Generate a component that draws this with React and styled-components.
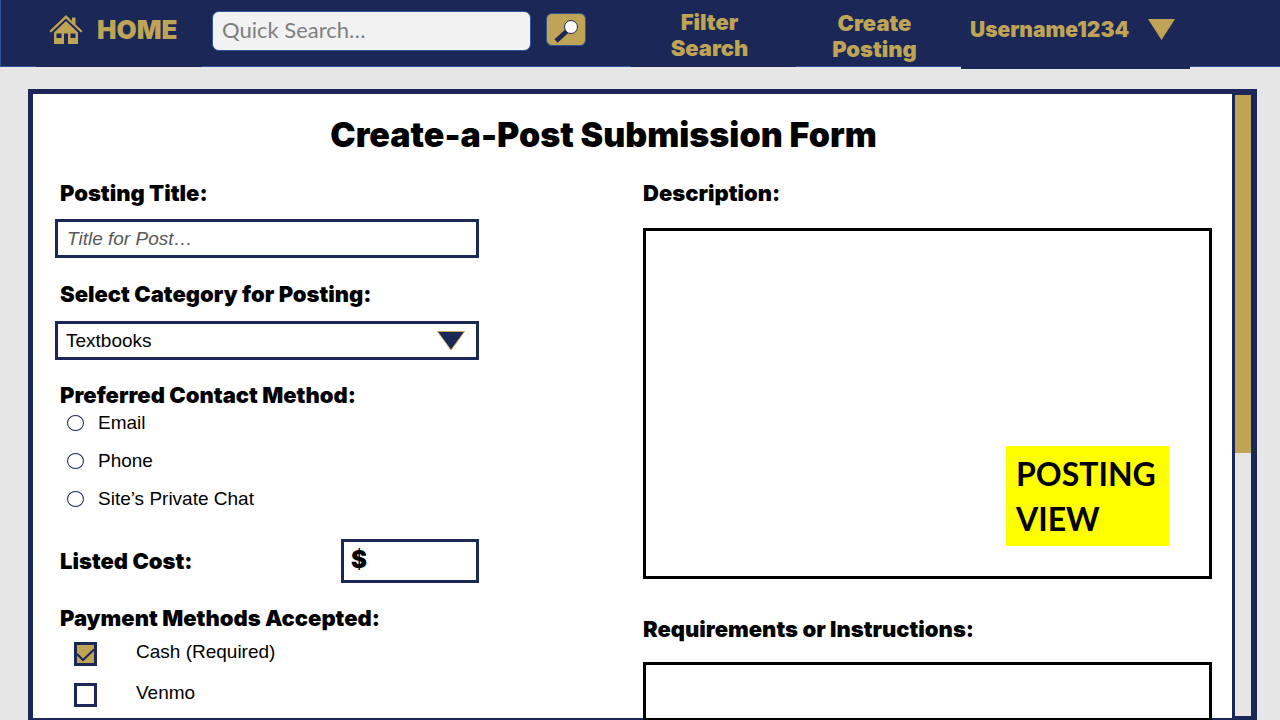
import React from "react";
import styled, { createGlobalStyle } from "styled-components";

const navy = "#1b2857";
const gold = "#bfa456";
const edge = "#2f5597";
const heavy = `"Inter", "Liberation Sans", sans-serif`;
const plain = `"Liberation Sans", Arial, sans-serif`;
const humanist = `"Lato", "Open Sans", sans-serif`;

const GlobalStyle = createGlobalStyle`
  *, *::before, *::after { box-sizing: border-box; }
  body { margin: 0; background: #e6e6e6; color: #000; font-family: ${plain}; }
  button, input, select, textarea { font: inherit; color: inherit; margin: 0; }
`;

const Page = styled.div`
  height: 100vh;
  display: flex;
  flex-direction: column;
  overflow: hidden;
`;

const Header = styled.header`
  display: flex;
  align-items: flex-start;
  height: 67px;
  flex: none;
  padding: 0 90px 0 35px;
  background: ${navy};
  border-left: 1px solid ${edge};
  border-bottom: 1px solid ${edge};
`;

const HomeLink = styled.a`
  display: flex;
  align-items: center;
  gap: 14px;
  width: 166px;
  height: 67px;
  padding: 0 0 7px 13px;
  background: ${navy};
  color: ${gold};
  font: 900 26px/28px ${heavy};
  text-decoration: none;
`;

const SearchForm = styled.form`
  display: flex;
  flex: 1;
  align-items: flex-start;
  gap: 15px;
  padding: 11px 45px 0 10px;
`;

const SearchInput = styled.input`
  flex: 1;
  min-width: 0;
  height: 40px;
  padding: 0 9px 4px;
  border: 1px solid ${edge};
  border-radius: 7px;
  background: #f2f2f2;
  font: 22px/28px ${humanist};
  &::placeholder { color: #7f7f7f; opacity: 1; }
`;

const SearchButton = styled.button`
  width: 40px;
  height: 33px;
  margin-top: 2px;
  padding: 0;
  border: 1px solid ${edge};
  border-radius: 6px;
  background: ${gold};
  svg { display: block; }
`;

const NavLink = styled.a`
  width: 165px;
  height: ${(p) => (p.$raised ? 66 : 67)}px;
  padding: ${(p) => (p.$raised ? 10 : 9)}px 42px 0 34px;
  background: ${navy};
  color: ${gold};
  font: 900 22px/26px ${heavy};
  text-align: center;
  text-decoration: none;
`;

const UserButton = styled.button`
  display: flex;
  align-items: center;
  justify-content: space-between;
  width: 229px;
  height: 69px;
  padding: 0 14px 10px 9px;
  border: 0;
  background: ${navy};
  color: ${gold};
  font: 900 21px/26px ${heavy};
`;

const Panel = styled.main`
  display: flex;
  flex: 1;
  min-height: 0;
  margin: 22px 23px 0 28px;
  border: 5px solid ${navy};
  border-bottom-width: 2px;
  background: #fff;
`;

const PostForm = styled.form`
  flex: 1;
  min-width: 0;
  padding: 21px 20px 0 22px;
`;

const Title = styled.h1`
  margin: 0 60px 26px 0;
  font: 900 34px/40px ${heavy};
  text-align: center;
`;

const Columns = styled.div`
  display: grid;
  grid-template-columns: 424fr 569fr;
  column-gap: 164px;
`;

const Column = styled.div`
  display: flex;
  flex-direction: column;
  min-width: 0;
`;

const Field = styled.div`
  display: flex;
  flex-direction: column;
  gap: ${(p) => p.$gap || 14}px;
  margin-bottom: ${(p) => p.$after || 24}px;
`;

const Label = styled.label`
  padding-left: ${(p) => (p.$flush ? 0 : 5)}px;
  font: 900 22px/24px ${heavy};
`;

const Group = styled.fieldset`
  min-width: 0;
  margin: 0 0 ${(p) => p.$after || 0}px;
  padding: 0;
  border: 0;
`;

const TextInput = styled.input`
  width: 100%;
  height: 39px;
  padding: 0 9px;
  border: 3px solid ${navy};
  background: #fff;
  font: 19px/24px ${plain};
  &::placeholder { color: #595959; opacity: 1; font-style: italic; }
`;

const SelectWrap = styled.div`
  position: relative;
  svg {
    position: absolute;
    right: 13px;
    top: 10px;
    pointer-events: none;
  }
`;

const Select = styled.select`
  display: block;
  width: 100%;
  height: 39px;
  padding: 0 8px;
  appearance: none;
  border: 3px solid ${navy};
  border-radius: 0;
  background: #fff;
  font: 19px/24px ${plain};
`;

const RadioList = styled.div`
  display: flex;
  flex-direction: column;
  gap: 14px;
  padding: 4px 0 0 12px;
`;

const RadioRow = styled.label`
  display: flex;
  align-items: center;
  gap: 14px;
  font: 19px/24px ${plain};
`;

const Radio = styled.input`
  appearance: none;
  width: 17px;
  height: 16px;
  border: 1px solid ${navy};
  border-radius: 50%;
  &:checked { background: ${gold}; }
`;

const CostRow = styled.div`
  display: flex;
  align-items: center;
  justify-content: space-between;
  margin-bottom: 23px;
`;

const CostInput = styled.input`
  width: 138px;
  height: 44px;
  padding: 0 7px 4px;
  border: 3px solid ${navy};
  background: #fff;
  font: 900 24px/28px ${heavy};
`;

const CheckList = styled.div`
  display: flex;
  flex-direction: column;
  gap: 17px;
  padding: 12px 0 0 19px;
`;

const CheckRow = styled.label`
  display: flex;
  align-items: flex-start;
  gap: 39px;
  font: 19px/20px ${plain};
`;

const CheckBox = styled.span`
  display: grid;
  width: 23px;
  height: 24px;
  input, svg { grid-area: 1 / 1; }
  input {
    appearance: none;
    width: 23px;
    height: 24px;
    border: 3px solid ${navy};
    background: #fff;
  }
  svg { visibility: hidden; pointer-events: none; }
  input:checked { background: ${gold}; }
  input:checked + svg { visibility: visible; }
`;

const AreaWrap = styled.div`
  position: relative;
`;

const TextArea = styled.textarea`
  display: block;
  width: 100%;
  height: ${(p) => p.$height}px;
  padding: 8px;
  resize: none;
  border: 3px solid #000;
  border-radius: 0;
  background: #fff;
  font: 19px/24px ${plain};
`;

const ViewNote = styled.div`
  position: absolute;
  right: 43px;
  bottom: 33px;
  width: 163px;
  padding: 5px 10px;
  background: #ff0;
  font: 700 32px/45px ${humanist};
`;

const ScrollTrack = styled.div`
  display: flex;
  flex-direction: column;
  width: 20px;
  border: solid ${navy};
  border-width: 1px 1px 2px 3px;
  background: #e6e6e6;
`;

const ScrollThumb = styled.div`
  flex: 0 0 358px;
  background: ${gold};
`;

function HouseIcon() {
  return (
    <svg width="34" height="30" viewBox="0 0 34 30" fill={gold} aria-hidden="true">
      <path d="M17 0 L23 6 V2.500 H26.500 V9.500 L33.500 16 L32 17.500 L17 3.500 L2 17.500 L0.500 16 Z" />
      <path
        fillRule="evenodd"
        d="M5 17.500 L17 6 L29 17.500 V29 H5 Z M7.500 18.500 V23 H12.500 V18.500 Z M15 18.500 V29 H19 V18.500 Z M21.500 18.500 V23 H26.500 V18.500 Z"
      />
    </svg>
  );
}

function MagnifierIcon() {
  return (
    <svg width="38" height="31" viewBox="0 0 38 31" aria-hidden="true">
      <path d="M9 27 L20 17" stroke={navy} strokeWidth="4.500" />
      <circle cx="24" cy="13" r="6.500" fill="#fff" stroke={navy} strokeWidth="1" />
    </svg>
  );
}

function App() {
  return (
    <Page>
      <GlobalStyle />
      <Header>
        <HomeLink href="#home">
          <HouseIcon />
          HOME
        </HomeLink>
        <SearchForm role="search" onSubmit={(e) => e.preventDefault()}>
          <SearchInput type="text" aria-label="Quick Search" placeholder="Quick Search…" />
          <SearchButton type="submit" aria-label="Search">
            <MagnifierIcon />
          </SearchButton>
        </SearchForm>
        <NavLink href="#filter">Filter Search</NavLink>
        <NavLink href="#create" $raised>Create Posting</NavLink>
        <UserButton type="button">
          Username1234
          <svg width="28" height="21" viewBox="0 0 28 21" aria-hidden="true">
            <path d="M0 0 H27 L13.500 21 Z" fill={gold} />
          </svg>
        </UserButton>
      </Header>

      <Panel>
        <PostForm onSubmit={(e) => e.preventDefault()}>
          <Title>Create-a-Post Submission Form</Title>
          <Columns>
            <Column>
              <Field>
                <Label htmlFor="title">Posting Title:</Label>
                <TextInput id="title" type="text" placeholder="Title for Post…" />
              </Field>
              <Field $gap={15} $after={23}>
                <Label htmlFor="category">Select Category for Posting:</Label>
                <SelectWrap>
                  <Select id="category" defaultValue="Textbooks">
                    <option>Textbooks</option>
                  </Select>
                  <svg width="30" height="20" viewBox="0 0 30 20" aria-hidden="true">
                    <path d="M1.500 0.500 H28.500 L15 19 Z" fill={navy} stroke={gold} />
                  </svg>
                </SelectWrap>
              </Field>
              <Group $after={28}>
                <Label as="legend">Preferred Contact Method:</Label>
                <RadioList>
                  {["Email", "Phone", "Site’s Private Chat"].map((name) => (
                    <RadioRow key={name}>
                      <Radio type="radio" name="contact" value={name} />
                      {name}
                    </RadioRow>
                  ))}
                </RadioList>
              </Group>
              <CostRow>
                <Label htmlFor="cost">Listed Cost:</Label>
                <CostInput id="cost" type="text" defaultValue="$" />
              </CostRow>
              <Group>
                <Label as="legend">Payment Methods Accepted:</Label>
                <CheckList>
                  {["Cash (Required)", "Venmo"].map((name, i) => (
                    <CheckRow key={name}>
                      <CheckBox>
                        <input type="checkbox" name="payment" value={name} defaultChecked={i === 0} />
                        <svg width="23" height="24" viewBox="0 0 23 24" aria-hidden="true">
                          <path d="M3 12 L9 18 L20 7.500" fill="none" stroke={navy} strokeWidth="2" />
                        </svg>
                      </CheckBox>
                      {name}
                    </CheckRow>
                  ))}
                </CheckList>
              </Group>
            </Column>

            <Column>
              <Field $gap={23} $after={38}>
                <Label htmlFor="description" $flush>Description:</Label>
                <AreaWrap>
                  <TextArea id="description" $height={351} />
                  <ViewNote>POSTING VIEW</ViewNote>
                </AreaWrap>
              </Field>
              <Field $gap={21}>
                <Label htmlFor="requirements" $flush>Requirements or Instructions:</Label>
                <TextArea id="requirements" $height={59} />
              </Field>
            </Column>
          </Columns>
        </PostForm>
        <ScrollTrack>
          <ScrollThumb />
        </ScrollTrack>
      </Panel>
    </Page>
  );
}

export default App;
